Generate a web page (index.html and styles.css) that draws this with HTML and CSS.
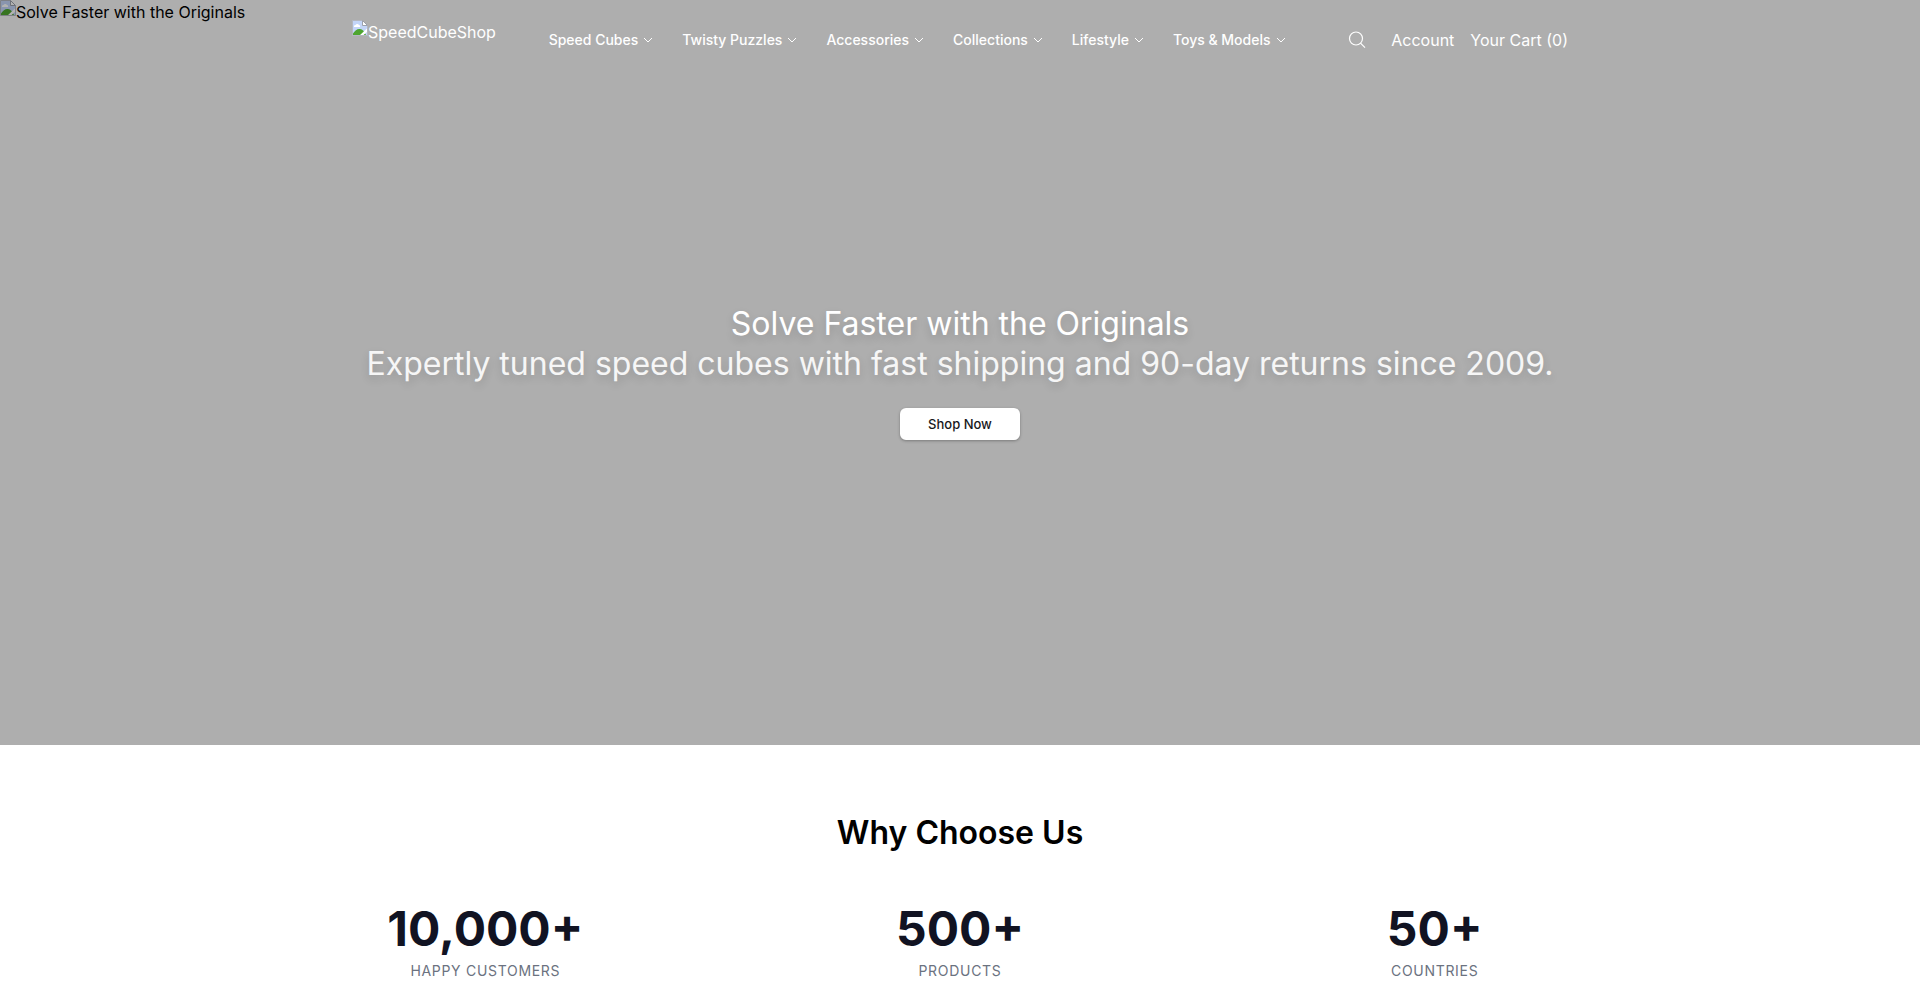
FILE: index.html
```html
<!DOCTYPE html>
<html lang="en">
<head>
<meta charset="utf-8">
<meta name="viewport" content="width=device-width, initial-scale=1">
<title>SpeedCubeShop</title>
<link rel="stylesheet" href="styles.css">
</head>
<body>
<svg class="sprite" aria-hidden="true">
  <symbol id="chevron" viewBox="0 0 12 12"><path d="M2 4l4 4 4-4" fill="none" stroke="currentColor" stroke-width="1"/></symbol>
  <symbol id="picture" viewBox="0 0 16 16">
    <path d="M.5.5h10l5 5v10H.5z" fill="#c3d5f8"/>
    <path d="M2 7a1.500 1.500 0 0 1 1.500-2 2 2 0 0 1 3.500 0 1.300 1.300 0 0 1 1 2z" fill="#fff"/>
    <path d="M1 15v-1.500c2-3 4.500-5 7-4.500 2.500.4 4.500 2.500 6 6z" fill="#4ea52f"/>
    <path d="M15.500 8L7.500 15.500h3.500l4.500-4z" fill="#fff"/>
    <path d="M15.500 6v9.500H.5V.5h10" fill="none" stroke="#b3b7c0"/>
    <path d="M10.500.5v5h5z" fill="#fff" stroke="#9ca1ab"/>
  </symbol>
</svg>
<section class="hero">
  <div class="hero-media"><svg class="picture"><use href="#picture"/></svg><span>Solve Faster with the Originals</span></div>
  <header class="header">
    <a class="logo" href="#"><svg class="picture" aria-hidden="true"><use href="#picture"/></svg><span>SpeedCubeShop</span></a>
    <nav class="nav" aria-label="Main">
      <button class="nav-item" type="button">Speed Cubes<svg class="chevron"><use href="#chevron"/></svg></button>
      <button class="nav-item" type="button">Twisty Puzzles<svg class="chevron"><use href="#chevron"/></svg></button>
      <button class="nav-item" type="button">Accessories<svg class="chevron"><use href="#chevron"/></svg></button>
      <button class="nav-item" type="button">Collections<svg class="chevron"><use href="#chevron"/></svg></button>
      <button class="nav-item" type="button">Lifestyle<svg class="chevron"><use href="#chevron"/></svg></button>
      <button class="nav-item" type="button">Toys &amp; Models<svg class="chevron"><use href="#chevron"/></svg></button>
    </nav>
    <div class="actions">
      <button class="search" type="button" aria-label="Search"><svg class="search-icon" viewBox="0 0 20 20" fill="none" stroke="currentColor" stroke-width="1.2"><circle cx="9" cy="8.500" r="6.500"/><path d="M13.500 13.200L18 17.700"/></svg></button>
      <a href="#">Account</a>
      <a href="#">Your Cart (0)</a>
    </div>
  </header>
  <div class="hero-content">
    <h1 class="hero-title">Solve Faster with the Originals</h1>
    <p class="hero-text">Expertly tuned speed cubes with fast shipping and 90-day returns since 2009.</p>
    <button class="cta" type="button">Shop Now</button>
  </div>
</section>
<section class="why">
  <h2 class="why-title">Why Choose Us</h2>
  <dl class="stats">
    <div class="stat"><dt>Happy Customers</dt><dd>10,000+</dd></div>
    <div class="stat"><dt>Products</dt><dd>500+</dd></div>
    <div class="stat"><dt>Countries</dt><dd>50+</dd></div>
  </dl>
</section>
</body>
</html>
```
FILE: styles.css
```css
* { box-sizing: border-box; }
html { overflow-x: hidden; }
body { margin: 0; background: #fff; color: #000; font-family: Inter, "Liberation Sans", sans-serif; font-size: 16px; line-height: 24px; }
h1, h2, p, dl, dd { margin: 0; }
a { color: inherit; text-decoration: none; }
button { border: 0; background: none; padding: 0; color: inherit; font: inherit; cursor: pointer; }
.sprite { position: absolute; width: 0; height: 0; }
.picture { display: block; flex: none; width: 16px; height: 16px; }

.hero { position: relative; display: flex; flex-direction: column; height: 75vh; background: #aeaeae; }
.hero-media { position: absolute; top: 0; left: 0; display: flex; }
.hero-media .picture { filter: brightness(0.7); }

.header { position: absolute; top: 0; left: 0; right: 0; display: flex; align-items: center; justify-content: space-between; width: 100%; max-width: 1280px; height: 80px; margin: 0 auto; padding: 0 32px; color: #fff; }
.logo { display: flex; align-self: flex-start; padding-top: 20px; }
.nav { display: flex; gap: 28px; }
.nav-item { display: flex; align-items: center; gap: 4px; font-size: 14px; line-height: 20px; font-weight: 500; }
.chevron { width: 12px; height: 12px; }
.actions { display: flex; align-items: center; gap: 16px; padding-left: 8px; }
.search { display: flex; margin-right: 8px; }
.search-icon { width: 20px; height: 20px; }

.hero-content { flex: 1; display: flex; flex-direction: column; align-items: center; justify-content: center; padding: 0 16px; text-align: center; color: #fff; }
.hero-title, .hero-text { font-size: 32px; line-height: 40px; font-weight: 400; text-shadow: 0 4px 8px rgba(0, 0, 0, 0.15); }
.hero-text { color: #f6f6f6; }
.cta { margin-top: 24px; height: 32px; padding: 0 28px; border-radius: 6px; background: #fff; color: #18181b; font-size: 13px; line-height: 20px; font-weight: 500; box-shadow: 0 1px 3px rgba(0, 0, 0, 0.3); }

.why { max-width: 1440px; margin: 0 auto; padding: 64px 32px; text-align: center; }
.why-title { font-size: 32px; line-height: 48px; font-weight: 600; }
.stats { display: grid; grid-template-columns: repeat(3, 1fr); gap: 48px; margin-top: 48px; }
.stat { display: flex; flex-direction: column-reverse; gap: 8px; }
.stat dt { color: #6b7280; font-size: 14px; line-height: 20px; letter-spacing: 0.05em; text-transform: uppercase; }
.stat dd { color: #111322; font-size: 48px; line-height: 48px; font-weight: 700; }
```
